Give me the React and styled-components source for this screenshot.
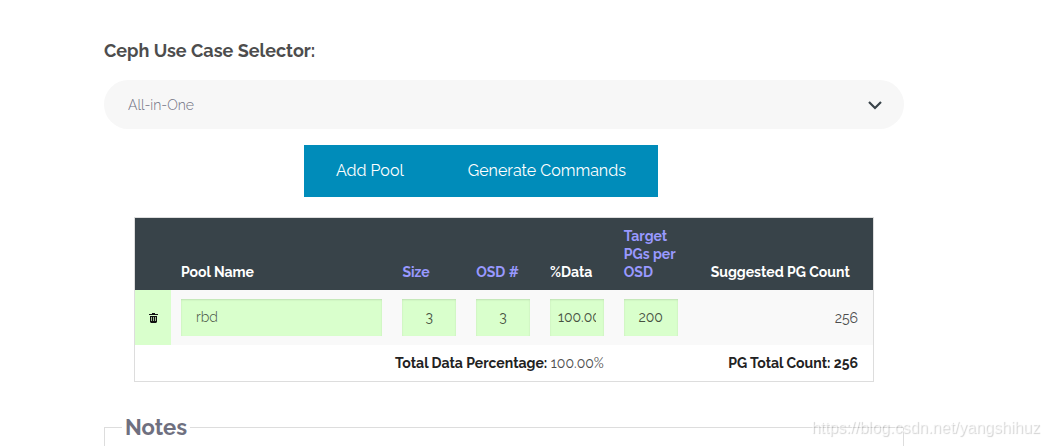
import React, { useState } from "react";
import styled, { createGlobalStyle } from "styled-components";

const GlobalStyle = createGlobalStyle`
  *, *::before, *::after { box-sizing: border-box; }
  body {
    margin: 0;
    background: #fff;
    color: #222;
    font: 14px/18px Raleway, Lato, "Open Sans", sans-serif;
  }
  button, input, select { font: inherit; margin: 0; }
`;

const Page = styled.main`
  display: flex;
  flex-direction: column;
  height: 100vh;
  overflow: hidden;
  padding: 40px 145px 0 104px;
`;

const SelectorLabel = styled.label`
  color: #4d4d4d;
  font-size: 18px;
  font-weight: 700;
  line-height: 22px;
`;

const SelectWrap = styled.div`
  display: grid;
  align-items: center;
  margin-top: 18px;
  & > * { grid-area: 1 / 1; }
`;

const Select = styled.select`
  appearance: none;
  width: 100%;
  height: 49px;
  padding: 0 24px;
  border: 0;
  border-radius: 25px;
  background: #f7f7f7;
  color: #6f7080;
  font-size: 14px;
  font-weight: 300;
`;

const Chevron = styled.svg`
  justify-self: end;
  margin-right: 21px;
  pointer-events: none;
`;

const Actions = styled.div`
  display: flex;
  margin: 16px 0 20px 25%;
`;

const ActionButton = styled.button`
  height: 52px;
  padding: 0 32px;
  border: 0;
  background: #008cba;
  color: #fff;
  font-size: 16px;
  white-space: nowrap;
  cursor: pointer;
`;

const TableFrame = styled.div`
  margin: 0 30px;
  border: 1px solid #ddd;
`;

const PoolTable = styled.table`
  width: 100%;
  table-layout: fixed;
  border-collapse: collapse;
`;

const Column = styled.col`
  width: ${({ $width }) => $width};
`;

const HeadRow = styled.tr`
  background: #384349;
`;

const HeadCell = styled.th`
  padding: 9px 10px;
  color: ${({ $linked }) => ($linked ? "#9999ff" : "#fff")};
  font-weight: 700;
  text-align: ${({ $align }) => $align || "left"};
  vertical-align: bottom;
`;

const PoolRow = styled.tr`
  background: #f9f9f9;
`;

const Cell = styled.td`
  padding: 9px 10px;
`;

const DeleteCell = styled.td`
  padding: 0;
  background: #d9ffcc;
  text-align: center;
`;

const DeleteButton = styled.button`
  display: inline-flex;
  padding: 4px;
  border: 0;
  background: none;
  cursor: pointer;
`;

const CountCell = styled.td`
  padding: 9px 15px;
  color: #4d4d4d;
  text-align: right;
`;

const Field = styled.input`
  display: block;
  width: 100%;
  height: 37px;
  padding: 0 ${({ $wide }) => ($wide ? "15px" : "8px")} 1px;
  border: 0;
  border-radius: 0;
  outline: 0;
  background: #d9ffcc;
  box-shadow: inset 0 1px 2px rgba(0, 0, 0, 0.12);
  color: #46503f;
  font-weight: ${({ $wide }) => ($wide ? 300 : 400)};
  text-align: ${({ $wide }) => ($wide ? "left" : "center")};
`;

const TotalCell = styled.td`
  padding: 9px ${({ $last }) => ($last ? "15px" : "10px")} 9px 0;
  color: #4d4d4d;
  text-align: right;
  strong { color: #222; }
`;

const Notes = styled.fieldset`
  flex: 1;
  min-width: 0;
  margin: 31px 0 0;
  padding: 0 17px;
  border: 1px solid #ddd;
  border-bottom: 0;
`;

const NotesTitle = styled.legend`
  padding: 0 3px;
  color: #6f7080;
  font-size: 22px;
  font-weight: 700;
  line-height: 28px;
`;

const Watermark = styled.div`
  position: fixed;
  right: 9px;
  bottom: 8px;
  color: rgba(255, 255, 255, 0.6);
  font: 16px/20px "Liberation Sans", Arial, sans-serif;
  text-shadow: 1px 1px 1px rgba(0, 0, 0, 0.18);
  pointer-events: none;
`;

const TrashIcon = () => (
  <svg width="9" height="10" viewBox="0 0 9 10" aria-hidden="true">
    <path d="M3 0h3v1h3v1H0V1h3z" fill="#111" />
    <path d="M1 3h7v6l-1 1H2L1 9z" fill="#111" />
    <path d="M2.5 4v4M4.5 4v4M6.5 4v4" stroke="#a3bf99" strokeWidth="1" />
  </svg>
);

const numericFields = [
  { key: "size", label: "Size", linked: true },
  { key: "osd", label: "OSD #", linked: true },
  { key: "data", label: "%Data", linked: false },
  { key: "target", label: "Target PGs per OSD", linked: true },
];

export default function App() {
  const [useCase, setUseCase] = useState("All-in-One");
  const [pool, setPool] = useState({
    name: "rbd",
    size: "3",
    osd: "3",
    data: "100.00",
    target: "200",
  });
  const update = (key) => (event) =>
    setPool({ ...pool, [key]: event.target.value });

  return (
    <>
      <GlobalStyle />
      <Page>
        <SelectorLabel htmlFor="use-case">Ceph Use Case Selector:</SelectorLabel>
        <SelectWrap>
          <Select
            id="use-case"
            value={useCase}
            onChange={(event) => setUseCase(event.target.value)}
          >
            <option>All-in-One</option>
          </Select>
          <Chevron width="16" height="10" viewBox="0 0 16 10" aria-hidden="true">
            <path d="M2 2l6 6 6-6" fill="none" stroke="#394349" strokeWidth="2.2" />
          </Chevron>
        </SelectWrap>

        <Actions>
          <ActionButton type="button">Add Pool</ActionButton>
          <ActionButton type="button">Generate Commands</ActionButton>
        </Actions>

        <TableFrame>
          <PoolTable>
            <colgroup>
              <Column $width="36px" />
              <Column $width="30%" />
              <Column $width="10%" />
              <Column $width="10%" />
              <Column $width="10%" />
              <Column $width="10%" />
              <Column $width="auto" />
            </colgroup>
            <thead>
              <HeadRow>
                <HeadCell as="td" />
                <HeadCell scope="col">Pool Name</HeadCell>
                {numericFields.map(({ key, label, linked }) => (
                  <HeadCell key={key} scope="col" $linked={linked}>
                    {label}
                  </HeadCell>
                ))}
                <HeadCell scope="col" $align="center">
                  Suggested PG Count
                </HeadCell>
              </HeadRow>
            </thead>
            <tbody>
              <PoolRow>
                <DeleteCell>
                  <DeleteButton type="button" aria-label="Delete pool">
                    <TrashIcon />
                  </DeleteButton>
                </DeleteCell>
                <Cell>
                  <Field
                    $wide
                    aria-label="Pool Name"
                    value={pool.name}
                    onChange={update("name")}
                  />
                </Cell>
                {numericFields.map(({ key, label }) => (
                  <Cell key={key}>
                    <Field
                      aria-label={label}
                      value={pool[key]}
                      onChange={update(key)}
                    />
                  </Cell>
                ))}
                <CountCell>256</CountCell>
              </PoolRow>
            </tbody>
            <tfoot>
              <tr>
                <TotalCell colSpan={5}>
                  <strong>Total Data Percentage:</strong> 100.00%
                </TotalCell>
                <TotalCell colSpan={2} $last>
                  <strong>PG Total Count: 256</strong>
                </TotalCell>
              </tr>
            </tfoot>
          </PoolTable>
        </TableFrame>

        <Notes>
          <NotesTitle>Notes</NotesTitle>
        </Notes>
      </Page>
      <Watermark>https://blog.csdn.net/yangshihuz</Watermark>
    </>
  );
}
